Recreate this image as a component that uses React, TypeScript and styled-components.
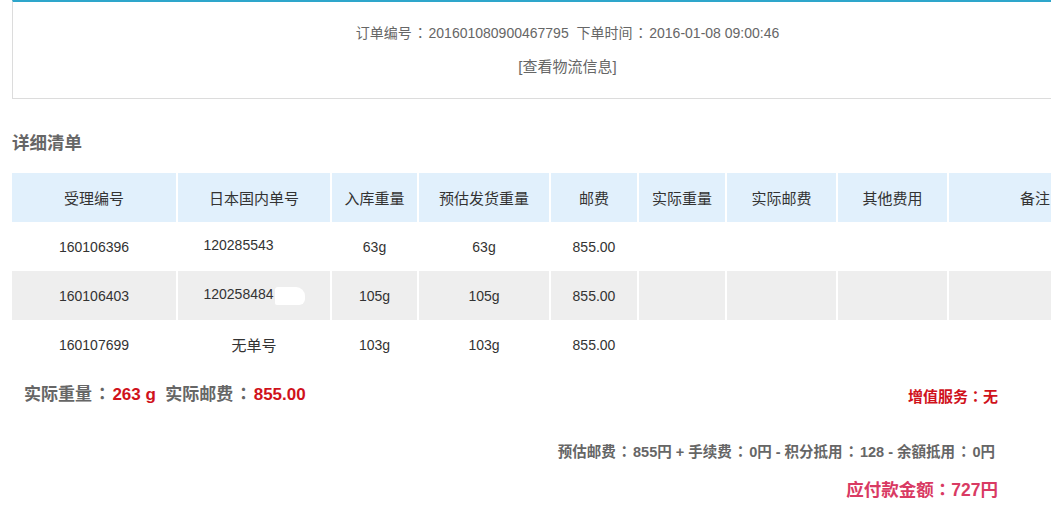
import React from 'react'
import styled, { createGlobalStyle } from 'styled-components'

const GlobalStyle = createGlobalStyle`
  html, body {
    margin: 0;
    padding: 0;
    background: #fff;
    overflow: hidden;
  }
  body {
    font-family: "Liberation Sans", "Noto Sans CJK SC", sans-serif;
    color: #333;
  }
`

type Row = {
  id: string
  jpNo: string
  masked?: boolean
  inWeight: string
  estWeight: string
  postage: string
}

const columns = [
  { title: '受理编号', width: 165 },
  { title: '日本国内单号', width: 154 },
  { title: '入库重量', width: 87 },
  { title: '预估发货重量', width: 132 },
  { title: '邮费', width: 88 },
  { title: '实际重量', width: 88 },
  { title: '实际邮费', width: 111 },
  { title: '其他费用', width: 111 },
  { title: '备注', width: 174 },
]

const rows: Row[] = [
  { id: '160106396', jpNo: '120285543', masked: true, inWeight: '63g', estWeight: '63g', postage: '855.00' },
  { id: '160106403', jpNo: '120258484', masked: true, inWeight: '105g', estWeight: '105g', postage: '855.00' },
  { id: '160107699', jpNo: '无单号', inWeight: '103g', estWeight: '103g', postage: '855.00' },
]

const Page = styled.div`
  width: 1110px;
  padding-left: 12px;
`

// full-width colon, centred like the original YaHei rendering
const Colon = styled.span<{ $tight?: boolean }>`
  font-family: "Noto Sans CJK TC", sans-serif;
  margin: 0 ${p => (p.$tight ? '0' : '0.1em')};
`

const OrderBox = styled.div`
  border-top: 2px solid #2ea6cb;
  border-left: 1px solid #dcdcdc;
  border-bottom: 1px solid #dcdcdc;
  padding: 13px 0 14px;
  text-align: center;
  font-size: 14px;
  color: #666;
  line-height: 34px;
`

const InfoLine = styled.div`
  white-space: pre;
`

const LogisticsLink = styled.a`
  color: #666;
  text-decoration: none;
  cursor: pointer;
  font-size: 15px;
`

const SectionTitle = styled.h3`
  margin: 32px 0 18px;
  font-size: 17.5px;
  line-height: 24px;
  font-weight: bold;
  color: #666;
`

const Table = styled.table`
  width: 1110px;
  table-layout: fixed;
  border-collapse: collapse;
  font-size: 14px;
`

const HeadCell = styled.th`
  height: 49px;
  padding: 0;
  background: #e1f0fc;
  border-right: 2px solid #fff;
  font-weight: normal;
  font-size: 15px;
  color: #333;
  text-align: center;
`

const BodyRow = styled.tr<{ $striped?: boolean }>`
  background: ${p => (p.$striped ? '#eeeeee' : '#fff')};
`

const Cell = styled.td<{ $cjk?: boolean }>`
  height: 49px;
  padding: 0;
  border-right: 2px solid #fff;
  text-align: center;
  color: #333;
  font-size: ${p => (p.$cjk ? '15px' : '14px')};
`

const Mask = styled.span`
  display: inline-block;
  width: 30px;
  height: 18px;
  margin-left: 1px;
  vertical-align: middle;
  background: #fff;
  border-radius: 3px 9px 6px 2px;
`

const Summary = styled.div`
  width: 986px;
`

const TotalsRow = styled.div`
  display: flex;
  justify-content: space-between;
  align-items: center;
  margin-top: 12px;
  padding-left: 12px;
`

const Totals = styled.div`
  font-size: 17px;
  line-height: 24px;
  font-weight: bold;
  color: #666;
  white-space: pre;
`

const Red = styled.span`
  color: #d0121b;
`

const Service = styled.div`
  font-size: 15px;
  font-weight: bold;
  color: #d0121b;
  padding-top: 3px;
`

const FeeLine = styled.div`
  margin-top: 34px;
  text-align: right;
  font-size: 14.5px;
  line-height: 20px;
  font-weight: bold;
  color: #666;
  padding-right: 3px;
`

const Payable = styled.div`
  margin-top: 13px;
  text-align: right;
  font-size: 17.5px;
  line-height: 28px;
  font-weight: bold;
  color: #d93a63;
`

const App = () => {
  return (
    <>
      <GlobalStyle />
      <Page>
        <OrderBox>
          <InfoLine>
            订单编号<Colon>：</Colon>201601080900467795  下单时间<Colon>：</Colon>2016-01-08 09:00:46
          </InfoLine>
          <InfoLine>
            <LogisticsLink>[查看物流信息]</LogisticsLink>
          </InfoLine>
        </OrderBox>

        <SectionTitle>详细清单</SectionTitle>

        <Table>
          <colgroup>
            {columns.map(c => (
              <col key={c.title} style={{ width: c.width }} />
            ))}
          </colgroup>
          <thead>
            <tr>
              {columns.map(c => (
                <HeadCell key={c.title}>{c.title}</HeadCell>
              ))}
            </tr>
          </thead>
          <tbody>
            {rows.map((r, i) => (
              <BodyRow key={r.id} $striped={i % 2 === 1}>
                <Cell>{r.id}</Cell>
                <Cell $cjk={!r.masked}>
                  {r.jpNo}
                  {r.masked && <Mask />}
                </Cell>
                <Cell>{r.inWeight}</Cell>
                <Cell>{r.estWeight}</Cell>
                <Cell>{r.postage}</Cell>
                <Cell />
                <Cell />
                <Cell />
                <Cell />
              </BodyRow>
            ))}
          </tbody>
        </Table>

        <Summary>
          <TotalsRow>
            <Totals>
              实际重量<Colon>：</Colon><Red>263 g</Red>  实际邮费<Colon>：</Colon><Red>855.00</Red>
            </Totals>
            <Service>
              增值服务<Colon $tight>：</Colon>无
            </Service>
          </TotalsRow>
          <FeeLine>
            预估邮费<Colon>：</Colon>855円 + 手续费<Colon>：</Colon>0円 - 积分抵用<Colon>：</Colon>128 - 余額抵用<Colon>：</Colon>0円
          </FeeLine>
          <Payable>
            应付款金额<Colon $tight>：</Colon>727円
          </Payable>
        </Summary>
      </Page>
    </>
  )
}

export default App
